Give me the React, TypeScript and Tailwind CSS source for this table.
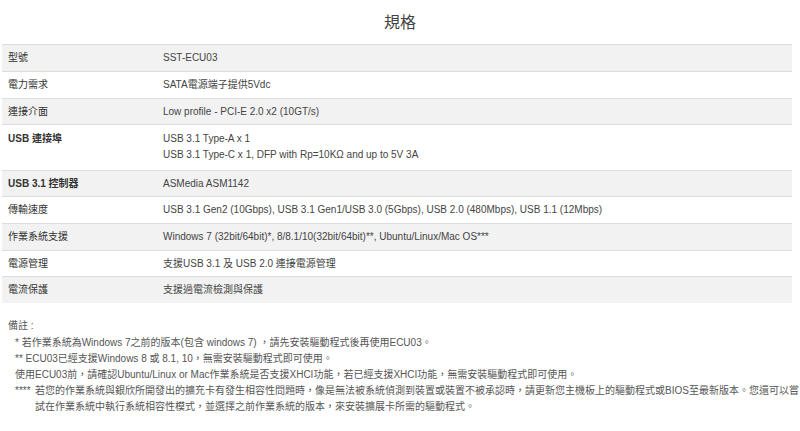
const font = {
  fontFamily: '"Liberation Sans", Arial, "Noto Sans CJK TC", sans-serif',
};

interface SpecRow {
  label: string;
  values: string[];
  h: string;
  bold?: boolean;
}

const rows: SpecRow[] = [
  { label: "型號", h: "h-[27px]", values: ["SST-ECU03"] },
  { label: "電力需求", h: "h-[27px]", values: ["SATA電源端子提供5Vdc"] },
  { label: "連接介面", h: "h-[26px]", values: ["Low profile - PCI-E 2.0 x2 (10GT/s)"] },
  {
    label: "USB 連接埠",
    h: "h-[46px]",
    bold: true,
    values: [
      "USB 3.1 Type-A x 1",
      "USB 3.1 Type-C x 1, DFP with Rp=10KΩ and up to 5V 3A",
    ],
  },
  { label: "USB 3.1 控制器", h: "h-[26px]", bold: true, values: ["ASMedia ASM1142"] },
  {
    label: "傳輸速度",
    h: "h-[27px]",
    values: [
      "USB 3.1 Gen2 (10Gbps), USB 3.1 Gen1/USB 3.0 (5Gbps), USB 2.0 (480Mbps), USB 1.1 (12Mbps)",
    ],
  },
  {
    label: "作業系統支援",
    h: "h-[27px]",
    values: [
      "Windows 7 (32bit/64bit)*, 8/8.1/10(32bit/64bit)**, Ubuntu/Linux/Mac OS***",
    ],
  },
  { label: "電源管理", h: "h-[26px]", values: ["支援USB 3.1 及 USB 2.0 連接電源管理"] },
  { label: "電流保護", h: "h-[27px]", values: ["支援過電流檢測與保護"] },
];

const notes = [
  "* 若作業系統為Windows 7之前的版本(包含 windows 7) ，請先安裝驅動程式後再使用ECU03。",
  "** ECU03已經支援Windows 8 或 8.1, 10，無需安裝驅動程式即可使用。",
  "使用ECU03前，請確認Ubuntu/Linux or Mac作業系統是否支援XHCI功能，若已經支援XHCI功能，無需安裝驅動程式即可使用。",
];

const App = () => {
  return (
    <div className="w-[800px] h-[431px] bg-white overflow-hidden" style={font}>
      <h2 className="h-[44px] pt-[13px] text-center text-[16px] leading-[20px] text-[#444]">
        規格
      </h2>

      <div className="ml-[2px] w-[790px]">
        {rows.map((row, i) => (
          <div
            key={row.label}
            className={`flex border-t border-[#dddddd] ${row.h} ${
              i % 2 === 0 ? "bg-[#f2f2f2]" : "bg-white"
            } ${row.values.length > 1 ? "pt-[7px]" : "pt-[6px]"}`}
          >
            <div
              className={`w-[161px] shrink-0 pl-[6px] text-[10px] leading-[14px] text-[#333] ${
                row.bold ? "font-bold" : ""
              }`}
            >
              {row.label}
            </div>
            <div className="flex flex-col gap-[2px] text-[10px] leading-[14px] text-[#444]">
              {row.values.map((v) => (
                <span key={v}>{v}</span>
              ))}
            </div>
          </div>
        ))}
      </div>

      <div className="mt-[15px] pl-[8px] text-[10px] leading-[16px] text-[#555]">
        <div className="mb-[1px]">備註 :</div>
        <div className="pl-[7px]">
          {notes.map((n) => (
            <div key={n}>{n}</div>
          ))}
          <div className="flex">
            <span className="w-[20px] shrink-0">****</span>
            <span>
              若您的作業系統與銀欣所開發出的擴充卡有發生相容性問題時，像是無法被系統偵測到裝置或裝置不被承認時，請更新您主機板上的驅動程式或BIOS至最新版本。您還可以嘗試在作業系統中執行系統相容性模式，並選擇之前作業系統的版本，來安裝擴展卡所需的驅動程式。
            </span>
          </div>
        </div>
      </div>
    </div>
  );
};

export default App;
